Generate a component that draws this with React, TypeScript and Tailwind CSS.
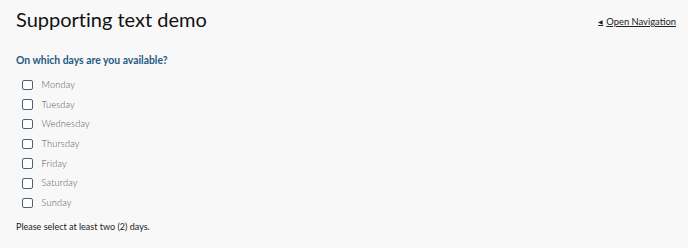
const days = ['Monday', 'Tuesday', 'Wednesday', 'Thursday', 'Friday', 'Saturday', 'Sunday'];

export default function App() {
  return (
    <div className="min-h-[248px] w-[688px] bg-[#f8f8f8] px-4 pt-[3px] text-[#1b1b1b]" style={{ fontFamily: 'Lato, "Open Sans", sans-serif' }}>
      <div className="flex items-start justify-between">
        <h1 className="text-[20px] leading-[32px] font-normal text-[#111] [font-variant-ligatures:none]">Supporting text demo</h1>
        <a href="#" className="mt-[12px] mr-[-4px] flex items-center gap-[3px] text-[9.4px] text-[#222] underline">
          <span className="text-[6px] leading-none">&#9664;</span>
          Open Navigation
        </a>
      </div>

      <fieldset className="mt-[17px]">
        <legend className="text-[10.4px] leading-[16px] font-bold text-[#245a80]">On which days are you available?</legend>
        <div className="mt-[7px] flex flex-col">
          {days.map((day) => (
            <label key={day} className="flex h-[19.7px] items-center gap-[9px] pl-[6px]">
              <input type="checkbox" className="h-[10.5px] w-[10.5px] appearance-none rounded-[2px] border-[1.5px] border-[#4a6374] bg-white" />
              <span className="text-[9.2px] font-light tracking-[0.2px] text-[#555]">{day}</span>
            </label>
          ))}
        </div>
        <p className="mt-[7px] text-[9px] text-[#1b1b1b]">Please select at least two (2) days.</p>
      </fieldset>
    </div>
  );
}
